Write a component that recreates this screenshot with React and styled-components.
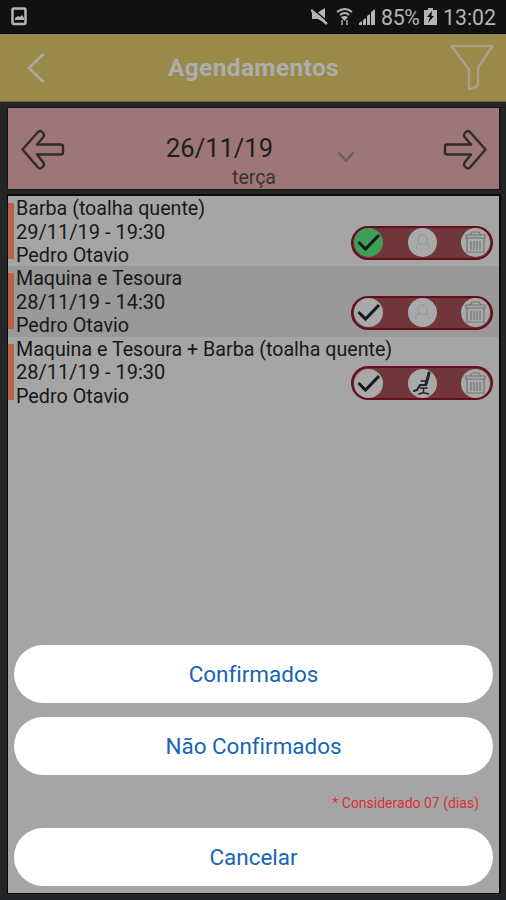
import React from "react";
import styled, { createGlobalStyle } from "styled-components";

const GlobalStyle = createGlobalStyle`
  * { box-sizing: border-box; }
  body { margin: 0; background: #242527; font-family: Roboto, sans-serif; font-variant-ligatures: none; }
  svg { display: block; flex: none; }
`;

const Screen = styled.div`
  position: relative;
  display: flex;
  flex-direction: column;
  width: 506px;
  height: 900px;
  overflow: hidden;
  background: #242527;
`;

const StatusBar = styled.div`
  display: flex;
  justify-content: space-between;
  align-items: center;
  height: 34px;
  padding: 0 10px 0 11px;
  background: #111;
  border-bottom: 1px solid #050505;
  color: #b4b4b4;
`;

const StatusGroup = styled.div`
  display: flex;
  align-items: center;
`;

const StatusText = styled.span`
  width: ${(p) => p.$width}px;
  margin-left: ${(p) => p.$gap}px;
  padding-top: 1px;
  font-size: 21.3px;
  line-height: 33px;
  letter-spacing: ${(p) => p.$spacing || 0}px;
  white-space: nowrap;
`;

const Header = styled.header`
  display: grid;
  grid-template-columns: 60px 1fr 60px;
  align-items: center;
  height: 68px;
  background: #998a49;
  border-bottom: 1px solid #716736;
  color: #b1aaa1;
`;

const Title = styled.h1`
  margin: 0;
  padding-left: 1px;
  font-size: 24.5px;
  font-weight: 700;
  line-height: 30px;
  letter-spacing: 0.35px;
  text-align: center;
  color: #adadad;
`;

const DateBar = styled.section`
  display: grid;
  grid-template-columns: 60px 1fr 60px;
  height: 83px;
  margin: 5px 5px 0 7px;
  background: #9d7777;
  border: 1px solid #151617;
  border-right-width: 2px;
  color: #211d1d;
`;

const ArrowSlot = styled.div`
  padding: 21px 0 0 ${(p) => p.$inset}px;
`;

const DateBlock = styled.div`
  display: grid;
  grid-template-columns: 98px 109px 1fr;
  grid-template-rows: 57px 24px;
`;

const DateText = styled.div`
  grid-column: 2;
  padding-top: 23px;
  font-size: 25.5px;
  line-height: 34px;
  white-space: nowrap;
`;

const ChevronSlot = styled.div`
  padding: 43px 0 0 62px;
`;

const Weekday = styled.div`
  grid-column: 1 / -1;
  padding-left: 164px;
  font-size: 19.5px;
  line-height: 25px;
  color: #393333;
`;

const List = styled.main`
  flex: none;
  height: 700px;
  margin: 4px 5px 0 7px;
  background: #a5a5a5;
  border: 1px solid #090a0b;
  border-top-width: 2px;
  border-right-width: 2px;
`;

const Row = styled.article`
  display: flex;
  height: 70.3px;
  padding-top: 1px;
  background: ${(p) => (p.$shaded ? "#999" : "#a5a5a5")};
`;

const Marker = styled.div`
  width: 6px;
  height: 56px;
  margin: 6px 2px 0 0;
  background: #b96148;
`;

const Details = styled.div`
  flex: 1;
  min-width: 0;
`;

const Line = styled.div`
  font-size: ${(p) => p.$size}px;
  line-height: 23.5px;
  white-space: nowrap;
  color: #181818;
`;

const Main = styled.div`
  display: flex;
  justify-content: space-between;
`;

const Actions = styled.div`
  display: flex;
  justify-content: space-between;
  align-items: center;
  width: 142px;
  height: 34px;
  margin: 5px 6px 0 0;
  padding: 0 1px;
  border: 2px solid #650f1c;
  border-radius: 17px;
  background: #70363a;
`;

const Circle = styled.div`
  display: flex;
  justify-content: center;
  align-items: center;
  width: 29px;
  height: 29px;
  border-radius: 50%;
  background: ${(p) => (p.$active ? "#3f9e58" : "#a9a9a9")};
`;

const Sheet = styled.div`
  position: absolute;
  left: 14px;
  right: 13px;
  bottom: 14px;
  display: flex;
  flex-direction: column;
`;

const SheetButton = styled.button`
  height: 58px;
  margin: 0 0 ${(p) => p.$gap || 0}px;
  padding: 1px 0 0;
  border: 0;
  border-radius: 29px;
  background: #fff;
  color: #1766b5;
  font: 400 22.45px/57px Roboto, sans-serif;
  font-variant-ligatures: none;
`;

const Note = styled.div`
  height: 53px;
  padding: 18px 14px 0 0;
  font-size: 14px;
  line-height: 20px;
  text-align: right;
  color: #dc2f34;
`;

const PictureIcon = () => (
  <svg width="17" height="19" viewBox="0 0 17 19">
    <rect x="1.5" y="1.5" width="13" height="15.5" rx="1.5" fill="none" stroke="#b4b4b4" strokeWidth="2.5" />
    <path d="M4 13v-2l3-2 2 1 2-2 2 3v2Z" fill="#b4b4b4" />
  </svg>
);

const SystemIcons = () => (
  <svg width="68" height="20" viewBox="0 0 68 20" fill="#b4b4b4">
    <path d="M1 6h5l8-5v15L7 12H1Z" />
    <path d="M1 1l16 14" stroke="#111" strokeWidth="1.500" />
    <path d="m0 3 16 14" stroke="#b4b4b4" strokeWidth="2.500" />
    <path d="M26 5q8-6 15 0M29 8q5-4 9 0" fill="none" stroke="#b4b4b4" strokeWidth="2" />
    <path d="m30 10 3.500 4 3.500-4q-3.500-2-7 0Z" />
    <path d="M30 13h2v5h-2ZM35 13h2v5h-2Z" fillOpacity=".72" />
    <path d="M48 18v-2l3-2v4ZM52 18v-5l3-2v7ZM56 18V9l3-2v11ZM60 18V5l4-3v16Z" />
  </svg>
);

const BatteryIcon = () => (
  <svg width="13" height="17" viewBox="0 0 13 17">
    <path d="M4 0h5v2h4v15H0V2h4Z" fill="#b4b4b4" />
    <path d="M8 3 3 9h3l-2 6 6-7H7.500Z" fill="#111" />
  </svg>
);

const BackIcon = () => (
  <svg width="60" height="67" viewBox="0 0 60 67" fill="none" stroke="#aba7a0" strokeWidth="2.700">
    <path d="M43.500 20 29 34l14.500 14" />
  </svg>
);

const FilterIcon = () => (
  <svg width="60" height="67" viewBox="0 0 60 67" fill="none" stroke="#b09c8f" strokeWidth="2.500" strokeLinejoin="round">
    <path d="M5.500 12h41L32 33.500V51q-2 3-9 4V35.500Z" />
  </svg>
);

const ArrowIcon = ({ right }) => (
  <svg width="44" height="42" viewBox="0 0 44 42" fill="none" stroke="#302b2b" strokeWidth="2.400" strokeLinejoin="round">
    <path
      transform={right ? "translate(44) scale(-1 1)" : undefined}
      d="M1.500 20.500 17 3q2-2 4 0l1 1q2 2 0 4.500L16 15.500H39.500q2.500 0 2.500 2v6q0 2-2.500 2H16L22 33q2 2.500 0 4.500l-1 1q-2 2-4 0Z"
    />
  </svg>
);

const ChevronDown = () => (
  <svg width="18" height="12" viewBox="0 0 18 12" fill="none" stroke="#64605f" strokeWidth="2.300">
    <path d="m1.500 1.500 7.500 8 7.500-8" />
  </svg>
);

const CheckIcon = () => (
  <svg width="29" height="29" viewBox="0 0 29 29" fill="none" stroke="#14191d" strokeWidth="3">
    <path d="m4.500 14 7 7L25 7" />
  </svg>
);

const PersonIcon = () => (
  <svg width="29" height="29" viewBox="0 0 29 29" fill="none" stroke="#959595" strokeWidth="1">
    <path d="M11 16q-2-2-1-6 1-3 4.500-3T19 10q1 4-1 6 3 0 3 5M8 21q0-5 3-5h7" />
  </svg>
);

const ChairIcon = () => (
  <svg width="29" height="29" viewBox="0 0 29 29" fill="none" stroke="#232323" strokeLinecap="round">
    <path d="m21 4-1 4-2 7" strokeWidth="3" />
    <path d="M18 16h-6l-3 5-3 1" strokeWidth="2" />
    <path d="M12 19h7M15.500 19v5M11 25l4.500-1.500 5 1.500M13 12h5" strokeWidth="1.500" />
  </svg>
);

const TrashIcon = () => (
  <svg width="29" height="29" viewBox="0 0 29 29" fill="none" stroke="#747576" strokeWidth="1.200">
    <path d="M5 7h19v3H5ZM9 7l2-3h7l2 3M6 10v14h17V10M10 13v9M13 13v9M16 13v9M19 13v9" />
  </svg>
);

const appointments = [
  { service: "Barba (toalha quente)", time: "29/11/19 - 19:30", active: true },
  { service: "Maquina e Tesoura", time: "28/11/19 - 14:30", shaded: true },
  { service: "Maquina e Tesoura + Barba (toalha quente)", time: "28/11/19 - 19:30", chair: true },
];

export default function App() {
  return (
    <Screen>
      <GlobalStyle />
      <StatusBar>
        <PictureIcon />
        <StatusGroup>
          <SystemIcons />
          <StatusText $width={43} $gap={2} $spacing={-0.3}>85%</StatusText>
          <BatteryIcon />
          <StatusText $width={53} $gap={6}>13:02</StatusText>
        </StatusGroup>
      </StatusBar>
      <Header>
        <BackIcon />
        <Title>Agendamentos</Title>
        <FilterIcon />
      </Header>
      <DateBar>
        <ArrowSlot $inset={12.5}><ArrowIcon /></ArrowSlot>
        <DateBlock>
          <DateText>26/11/19</DateText>
          <ChevronSlot><ChevronDown /></ChevronSlot>
          <Weekday>terça</Weekday>
        </DateBlock>
        <ArrowSlot $inset={3.5}><ArrowIcon right /></ArrowSlot>
      </DateBar>
      <List>
        {appointments.map((item) => (
          <Row key={item.service} $shaded={item.shaded}>
            <Marker />
            <Details>
              <Line $size={19.65}>{item.service}</Line>
              <Main>
                <div>
                  <Line $size={20}>{item.time}</Line>
                  <Line $size={19.8}>Pedro Otavio</Line>
                </div>
                <Actions>
                  <Circle $active={item.active}><CheckIcon /></Circle>
                  <Circle>{item.chair ? <ChairIcon /> : <PersonIcon />}</Circle>
                  <Circle><TrashIcon /></Circle>
                </Actions>
              </Main>
            </Details>
          </Row>
        ))}
      </List>
      <Sheet>
        <SheetButton $gap={14}>Confirmados</SheetButton>
        <SheetButton>Não Confirmados</SheetButton>
        <Note>* Considerado 07 (dias)</Note>
        <SheetButton>Cancelar</SheetButton>
      </Sheet>
    </Screen>
  );
}
